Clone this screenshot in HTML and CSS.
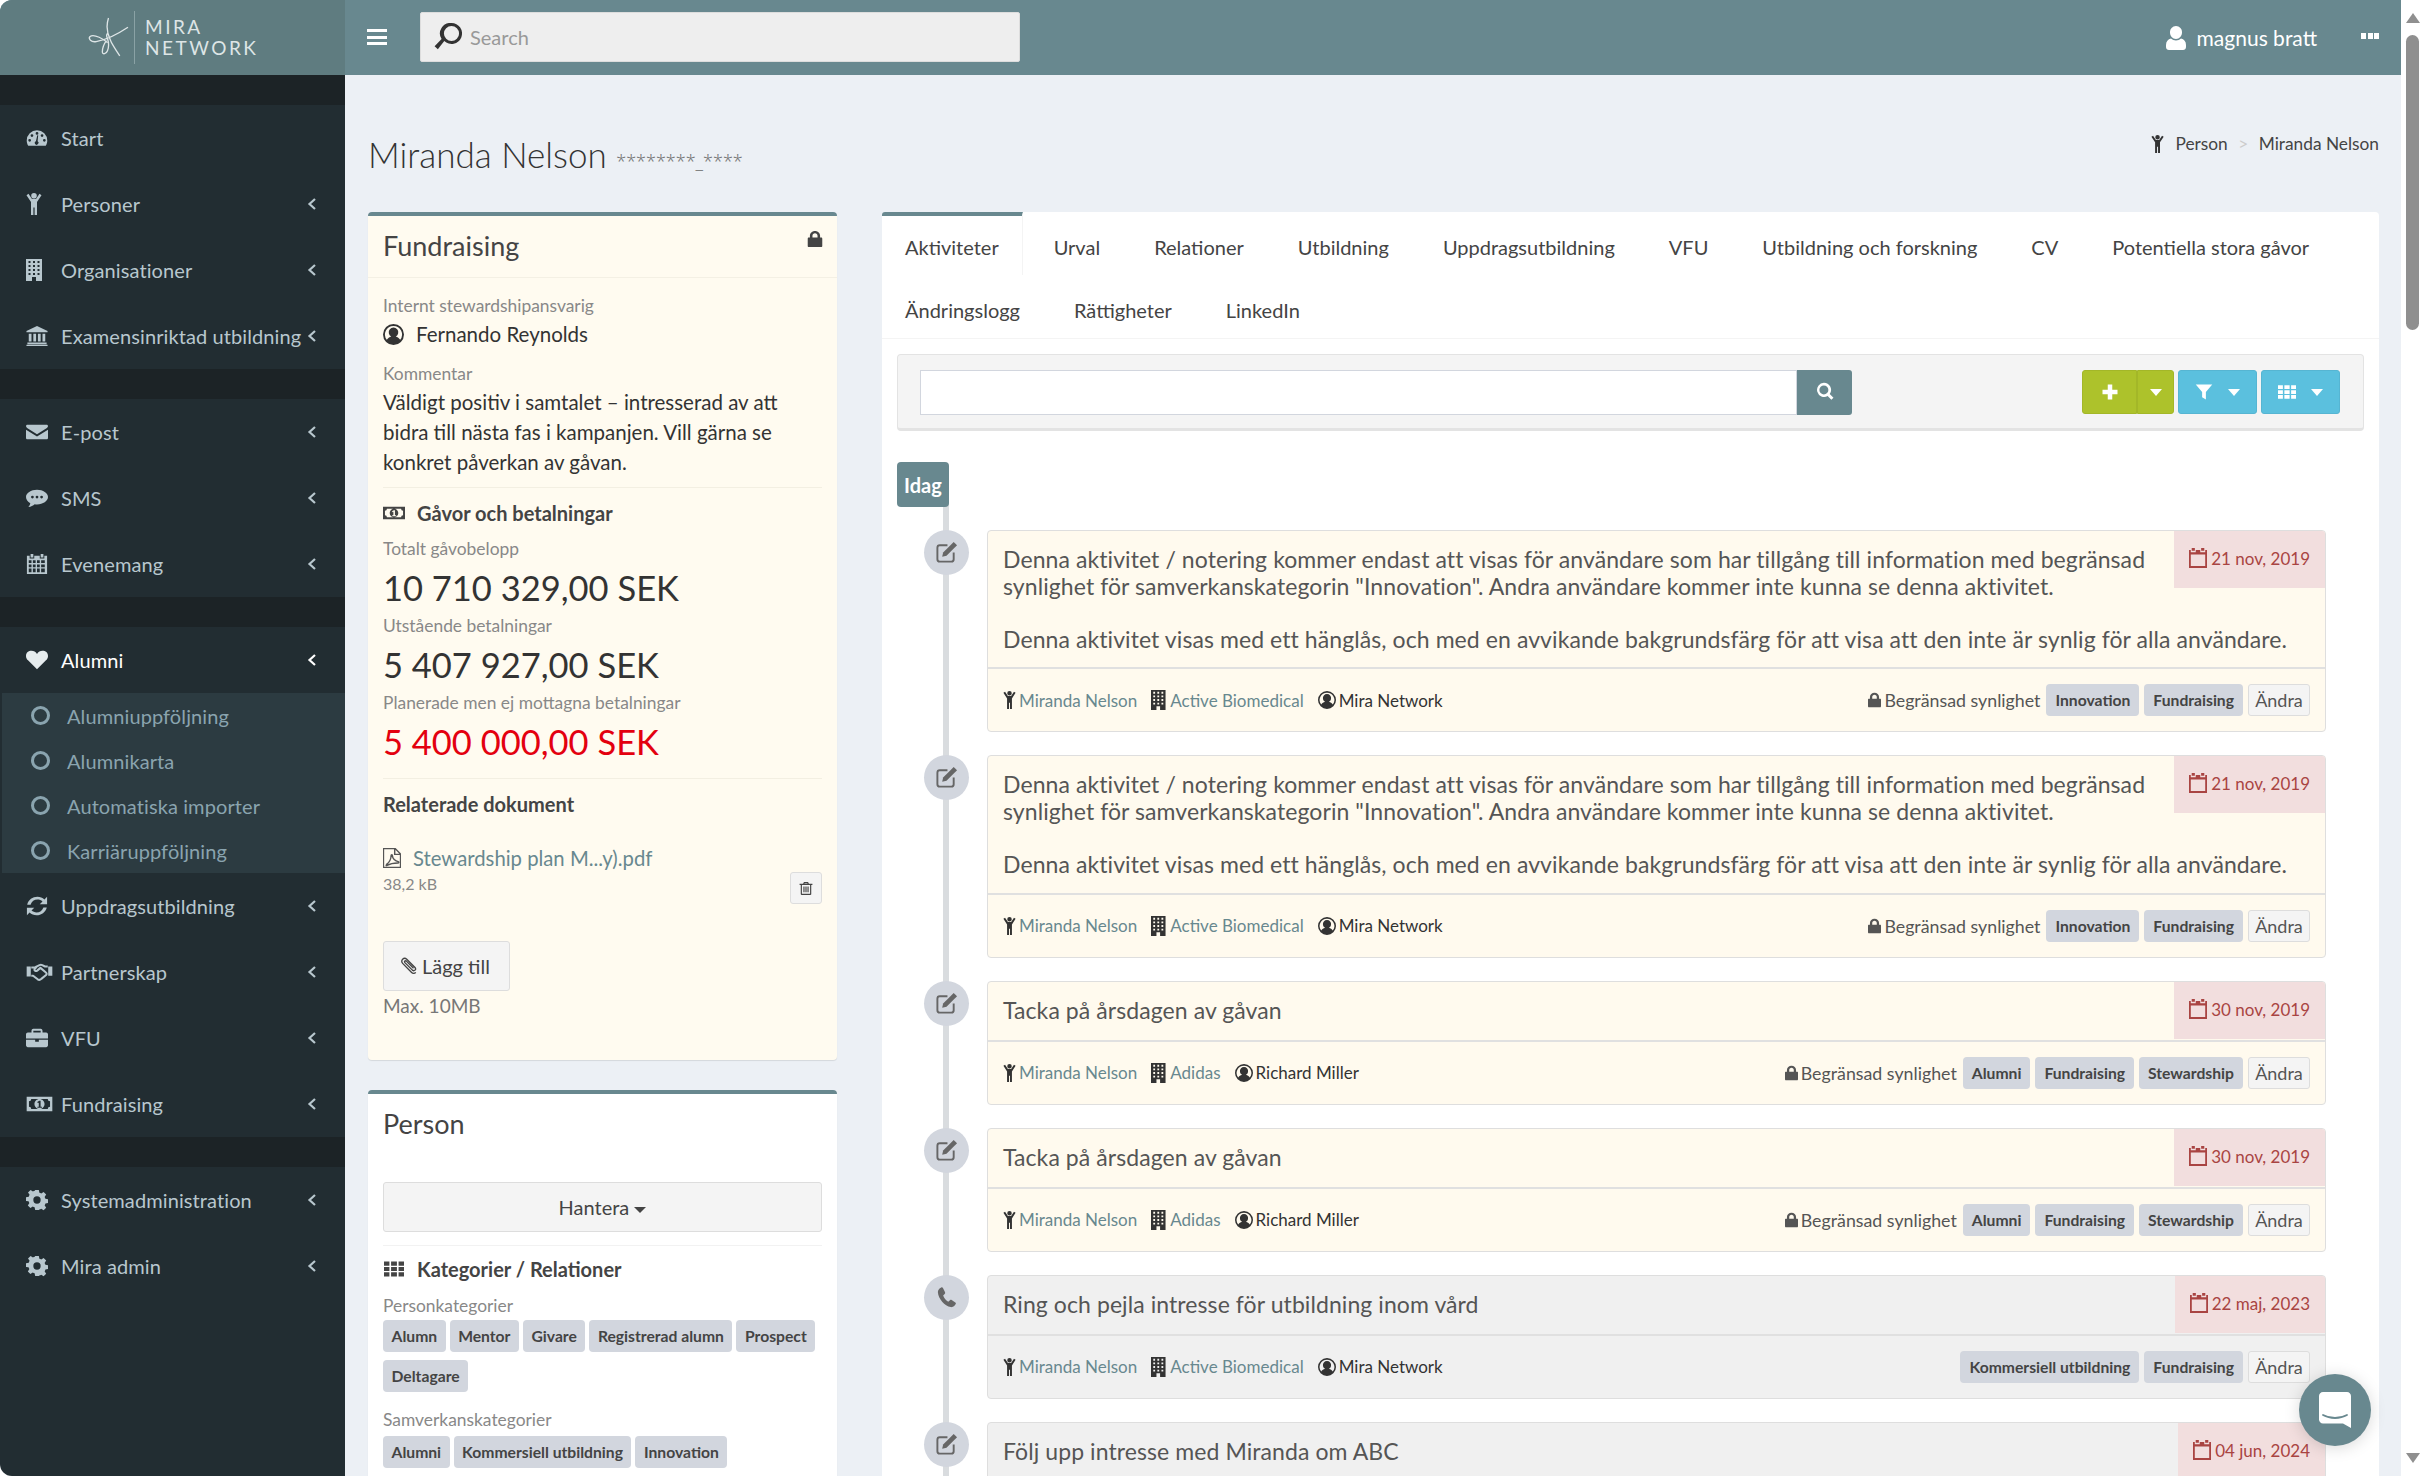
FILE: index.html
```html
<!DOCTYPE html>
<html lang="sv">
<head>
    <meta charset="UTF-8">
    <title>Miranda Nelson - Mira Network</title>
    <link rel="stylesheet" href="styles.css">
</head>
<body>
    <svg class="sprite" xmlns="http://www.w3.org/2000/svg">
        <symbol id="i-dash" viewBox="0 0 24 24"><path fill-rule="evenodd" d="M12 3.5A11.2 11.2 0 0 0 .8 14.7c0 2.2.6 4.2 1.7 5.8h19c1.100-1.600 1.700-3.600 1.700-5.800A11.200 11.200 0 0 0 12 3.500zM12 5.500a1.500 1.500 0 1 1 0 3 1.500 1.500 0 0 1 0-3zM6.500 7.800a1.500 1.500 0 1 1 0 3 1.500 1.500 0 0 1 0-3zM4 13a1.500 1.500 0 1 1 0 3 1.500 1.500 0 0 1 0-3zM20 13a1.500 1.500 0 1 1 0 3 1.500 1.500 0 0 1 0-3zM17.500 7.800a1.500 1.500 0 1 1 0 3 1.500 1.500 0 0 1 0-3zM10.800 15.500l1.500-6.500h1l-.6 6.600a2 2 0 1 1-1.900-.1z"/></symbol>
        <symbol id="i-child" viewBox="4 1 16 22" preserveAspectRatio="xMinYMid"><path d="M12 1a2.800 2.800 0 1 1 0 5.600A2.800 2.800 0 0 1 12 1zM4.500 3.200l2-1.400L10 7h4l3.500-5.200 2 1.400L15 10v13h-2.400v-7.500h-1.200V23H9V10z"/></symbol>
        <symbol id="i-building" viewBox="4 1 16 22" preserveAspectRatio="xMinYMid"><path fill-rule="evenodd" d="M4 1h16v22H4zM6.500 3v2h2V3zM11 3v2h2V3zM15.500 3v2h2V3zM6.500 7v2h2V7zM11 7v2h2V7zM15.500 7v2h2V7zM6.500 11v2h2v-2zM11 11v2h2v-2zM15.500 11v2h2v-2zM6.500 15v2h2v-2zM15.500 15v2h2v-2zM11 15v2h2v-2zM10 19v4h4v-4z"/></symbol>
        <symbol id="i-bank" viewBox="0 0 24 24"><path d="M12 1l11.500 5.500V8H.5V6.500zM3 9.500h3V18H3zM8 9.500h3V18H8zM13 9.500h3V18h-3zM18 9.500h3V18h-3zM1.500 19h21v2h-21zM.5 21.500h23V23H.5z"/></symbol>
        <symbol id="i-mail" viewBox="0 0 24 24"><path d="M1.500 4h21c.800 0 1.500.7 1.500 1.500 0 .8-.500 1.600-1.200 2.100L12 14.500 1.200 7.600C.5 7.100 0 6.300 0 5.500 0 4.700.7 4 1.500 4zM0 9.500l12 7.500 12-7.500v9c0 .800-.700 1.500-1.500 1.500h-21C.7 20 0 19.300 0 18.500z"/></symbol>
        <symbol id="i-sms" viewBox="0 0 24 24"><path fill-rule="evenodd" d="M12 3c6.600 0 12 3.600 12 8s-5.400 8-12 8c-.9 0-1.700-.1-2.500-.2C7.800 20.500 5.500 21.500 2.500 21.800c1.200-1.200 2-2.700 2.200-4.200C1.900 16.200 0 13.800 0 11c0-4.400 5.400-8 12-8zM7 9.500a1.500 1.500 0 1 0 0 3 1.500 1.500 0 0 0 0-3zM12 9.500a1.500 1.500 0 1 0 0 3 1.500 1.500 0 0 0 0-3zM17 9.500a1.500 1.500 0 1 0 0 3 1.500 1.500 0 0 0 0-3z"/></symbol>
        <symbol id="i-cal" viewBox="0 0 24 24"><path fill-rule="evenodd" d="M5 1h3v4H5zM16 1h3v4h-3zM1 3h3v3h5V3h6v3h5V3h3v20H1zM3 8v3h3V8zM7.500 8v3h3V8zM12 8v3h3V8zM16.500 8v3h4V8zM3 12.500v3h3v-3zM7.500 12.500v3h3v-3zM12 12.500v3h3v-3zM16.500 12.500v3h4v-3zM3 17v4h3v-4zM7.500 17v4h3v-4zM12 17v4h3v-4zM16.500 17v4h4v-4z"/></symbol>
        <symbol id="i-heart" viewBox="0 0 24 24"><path d="M12 22L2.200 12.400C.7 10.900 0 9.200 0 7.500 0 4 2.700 2 6 2c2.400 0 4.700 1.300 6 3.400C13.300 3.300 15.600 2 18 2c3.300 0 6 2 6 5.500 0 1.700-.7 3.400-2.200 4.900z"/></symbol>
        <symbol id="i-refresh" viewBox="0 0 24 24"><path d="M23 2v8h-8l3-3c-1.500-1.300-3.400-2-5.500-2-3.400 0-6.400 2.100-7.500 5.500H1.300C2.700 5.300 7.200 2 12.500 2c2.900 0 5.600 1.100 7.600 3zM1 22v-8h8l-3 3c1.500 1.300 3.400 2 5.500 2 3.400 0 6.400-2.100 7.500-5.500h3.700C21.300 18.700 16.800 22 11.500 22c-2.900 0-5.600-1.100-7.600-3z"/></symbol>
        <symbol id="i-hands" viewBox="0 0 28 24"><path fill="none" stroke="currentColor" stroke-width="2.200" stroke-linejoin="round" d="M5 7h4l5-2.500c1-.4 2-.4 3 0L20 6h3M5 16h2l5 4c1.500 1 3 .5 4-.5l5.500-4.500c.6-.8.2-2-.5-2.500L15 7.500l-3.500 3c-1.500 1-3.500 0-3-1.500L11 6"/><path d="M0 6h4.500v11H0zM23.500 6H28v10h-4.500z"/></symbol>
        <symbol id="i-case" viewBox="0 0 24 24"><path fill-rule="evenodd" d="M8 2h8c1 0 2 1 2 2v2h4c1 0 2 1 2 2v4.500H0V8c0-1 1-2 2-2h4V4c0-1 1-2 2-2zM8 4v2h8V4zM0 14h10v2h4v-2h10v6c0 1-1 2-2 2H2c-1 0-2-1-2-2z"/></symbol>
        <symbol id="i-money" viewBox="0 0 28 24"><path fill-rule="evenodd" d="M0 4h28v16H0zM5 6.500a2.500 2.500 0 0 1-2.500 2.500v6A2.500 2.500 0 0 1 5 17.500h18a2.500 2.500 0 0 1 2.500-2.500V9A2.500 2.500 0 0 1 23 6.500zM14 6.500c3 0 5.500 2.500 5.500 5.500s-2.500 5.500-5.500 5.500S8.500 15 8.500 12 11 6.500 14 6.500zM13.800 8.500l-2.300 1.300.7 1.200 1-.5V15h-1.500v1h5v-1h-1.500V8.500z"/></symbol>
        <symbol id="i-cog" viewBox="0 0 24 24"><path fill-rule="evenodd" d="M10 1h4l.6 3c.7.200 1.400.5 2 .9l2.600-1.700 2.800 2.800-1.700 2.600c.4.600.7 1.300.9 2l3 .6v4l-3 .6c-.2.700-.5 1.400-.9 2l1.700 2.600-2.800 2.800-2.600-1.700c-.6.400-1.300.7-2 .9L14 23h-4l-.6-3c-.7-.2-1.400-.5-2-.9l-2.600 1.700L2 18l1.700-2.600c-.4-.6-.7-1.300-.9-2L0 13V9l3-.6c.2-.7.5-1.400.9-2L2.200 3.800 5 1l2.600 1.700c.6-.4 1.300-.7 2-.9zM12 8a4 4 0 1 0 0 8 4 4 0 0 0 0-8z"/></symbol>
        <symbol id="i-chev" viewBox="0 0 12 24"><path fill="none" stroke="currentColor" stroke-width="2.200" d="M9 7l-5.500 5L9 17"/></symbol>
        <symbol id="i-lock" viewBox="2 1 20 22"><path fill-rule="evenodd" d="M12 1c3.900 0 7 3 7 6.500V10h1.500c1 0 1.500.7 1.500 1.500v10c0 .8-.5 1.500-1.500 1.500h-17C2.500 23 2 22.300 2 21.500v-10C2 10.700 2.500 10 3.500 10H5V7.500C5 4 8.100 1 12 1zM12 4C10 4 8.500 5.500 8.500 7.500V10h7V7.500C15.500 5.500 14 4 12 4z"/></symbol>
        <symbol id="i-ucircle" viewBox="1 1 22 22"><path fill-rule="evenodd" d="M12 1a11 11 0 1 1 0 22 11 11 0 0 1 0-22zM12 3a9 9 0 0 0-7 14.600c1-1.800 2.800-3 4.600-3.500a5 5 0 1 1 4.800 0c1.800.5 3.600 1.700 4.600 3.500A9 9 0 0 0 12 3z"/></symbol>
        <symbol id="i-pdf" viewBox="2 1 20 22"><path fill="none" stroke="currentColor" stroke-width="1.600" d="M2.500 1.500h13l6 6v15h-19zM15 1.500V8h6.500M6 19c3-2 5-6.500 5-9.500 0-1.500 1.500-1.500 1.500 0 0 3 3 6 6.500 6.500.8.200.8 1.500-.5 1.500-3.500 0-9 1-12 2.800-1 .6-1.300-.3-.5-.8z"/></symbol>
        <symbol id="i-trash" viewBox="0 0 24 24"><path fill-rule="evenodd" d="M8.500 1h7l1.500 3h6v2h-2v15.500c0 1-.8 1.500-1.500 1.500h-15C3.800 23 3 22.500 3 21.500V6H1V4h6zM9.800 3l-.5 1h5.400l-.5-1zM5 6v15h14V6zM7.500 8.500h2v10h-2zM11 8.500h2v10h-2zM14.500 8.500h2v10h-2z"/></symbol>
        <symbol id="i-clip" viewBox="0 0 24 24"><path fill="none" stroke="currentColor" stroke-width="1.800" d="M21 20.500c-1.500 1.800-4 1.800-5.500.3L3.500 8.500C1.800 6.800 2 4.500 3.500 3S7.200 1.300 9 3l11 11c1 1.200 1 2.500 0 3.500s-2.300 1-3.500 0L6.500 7.500c-.6-.8-.6-1.500 0-2s1.400-.5 2 0l9.500 9.500"/></symbol>
        <symbol id="i-th" viewBox="0 0 24 24"><path d="M0 3h6.500v5H0zM8.500 3h7v5h-7zM17.500 3H24v5h-6.500zM0 9.500h6.500v5H0zM8.500 9.500h7v5h-7zM17.500 9.500H24v5h-6.500zM0 16h6.500v5H0zM8.500 16h7v5h-7zM17.500 16H24v5h-6.500z"/></symbol>
        <symbol id="i-plus" viewBox="0 0 24 24"><path d="M9 2h6v7h7v6h-7v7H9v-7H2V9h7z"/></symbol>
        <symbol id="i-filter" viewBox="0 0 24 24"><path d="M1 2h22L14.500 12v10l-5-3v-7z"/></symbol>
        <symbol id="i-search" viewBox="0 0 24 24"><path fill-rule="evenodd" d="M10.500 1a9.500 9.500 0 0 1 7.800 15l5 5-2.800 2.800-5-5A9.500 9.500 0 1 1 10.500 1zM10.500 4.500a6 6 0 1 0 0 12 6 6 0 0 0 0-12z"/></symbol>
        <symbol id="i-edit" viewBox="0 0 24 24"><path fill="none" stroke="currentColor" stroke-width="2" d="M13 4.500H5C3.500 4.500 2.500 5.500 2.500 7v12c0 1.500 1 2.500 2.500 2.500h12c1.500 0 2.500-1 2.500-2.500v-7"/><path d="M19.500 1l3.500 3.500L12 15.500l-4.500 1 1-4.500z"/></symbol>
        <symbol id="i-phone" viewBox="0 0 24 24"><path d="M6.500 1.500c.7-.4 1.400-.2 1.800.5l2.200 4.500c.3.700.1 1.300-.4 1.800L8.500 10c.8 2.500 2.800 5.200 5.300 6.500l1.800-1.700c.5-.5 1.200-.6 1.800-.2l3.800 2.500c.6.400.8 1.200.4 1.800-1.200 2-3 3.600-5.100 3.100C10 20.800 3.500 13.500 3 6.500c-.1-2.200 1.500-4 3.500-5z"/></symbol>
        <symbol id="i-calo" viewBox="2 1 20 22"><path fill-rule="evenodd" d="M5 1h3.500v3H5zM15.500 1H19v3h-3.500zM2 3h2v2.500h5.500V3h5v2.500H20V3h2v20H2zM4 8v13h16V8z"/></symbol>
        <symbol id="i-user" viewBox="0 0 24 24"><path d="M12 0a6 6 0 0 1 6 6.500C18 10 15.500 13 12 13S6 10 6 6.500A6 6 0 0 1 12 0zM7 12.500c1.300 1.200 3 2 5 2s3.700-.8 5-2c3 .6 5 3 5 6.500v2c0 1.800-1.300 3-3 3H5c-1.700 0-3-1.200-3-3v-2c0-3.500 2-5.900 5-6.500z"/></symbol>
        <symbol id="i-mag" viewBox="0 0 24 24"><path fill-rule="evenodd" d="M15 0a9 9 0 1 1-6.200 15.500l-5.500 7L.5 20l6-6.200A9 9 0 0 1 15 0zM15 2.500a6.500 6.500 0 1 0 0 13 6.500 6.500 0 0 0 0-13z"/></symbol>
    </svg>

    <div class="window">
        <div class="app">
            <header class="topbar">
                <a class="logo">
                    <svg class="logo-mark" viewBox="0 0 40 40"><path fill="none" stroke="currentColor" stroke-width="1.300" d="M20 1c-2 6-2 14 2 22 2 5 6 10 9 15M39 10C30 16 20 22 8 24c-5 1-8-3-6-5 4-3 14 3 17 6M18 23c-3 4-4 9-4 11 0 3 4 2 5-1 2-5 1-9 0-12-1-2-1-4 0-5"/></svg>
                    <span class="logo-text"><span>MIRA</span><span>NETWORK</span></span>
                </a>
                <div class="topbar-main">
                    <button class="burger"><span></span><span></span><span></span></button>
                    <div class="topsearch"><svg class="ic"><use href="#i-mag"/></svg><span>Search</span></div>
                    <div class="topuser"><svg class="ic"><use href="#i-user"/></svg><span>magnus bratt</span></div>
                    <div class="topdots"><i></i><i></i><i></i></div>
                </div>
            </header>

            <nav class="sidebar">
                <div class="nav-gap"></div>
                <ul class="nav-group">
                    <li class="nav-item"><svg class="ic"><use href="#i-dash"/></svg><span>Start</span></li>
                    <li class="nav-item"><svg class="ic"><use href="#i-child"/></svg><span>Personer</span><svg class="chev"><use href="#i-chev"/></svg></li>
                    <li class="nav-item"><svg class="ic"><use href="#i-building"/></svg><span>Organisationer</span><svg class="chev"><use href="#i-chev"/></svg></li>
                    <li class="nav-item"><svg class="ic"><use href="#i-bank"/></svg><span>Examensinriktad utbildning</span><svg class="chev"><use href="#i-chev"/></svg></li>
                </ul>
                <div class="nav-gap"></div>
                <ul class="nav-group">
                    <li class="nav-item"><svg class="ic"><use href="#i-mail"/></svg><span>E-post</span><svg class="chev"><use href="#i-chev"/></svg></li>
                    <li class="nav-item"><svg class="ic"><use href="#i-sms"/></svg><span>SMS</span><svg class="chev"><use href="#i-chev"/></svg></li>
                    <li class="nav-item"><svg class="ic"><use href="#i-cal"/></svg><span>Evenemang</span><svg class="chev"><use href="#i-chev"/></svg></li>
                </ul>
                <div class="nav-gap"></div>
                <ul class="nav-group">
                    <li class="nav-item active"><svg class="ic"><use href="#i-heart"/></svg><span>Alumni</span><svg class="chev"><use href="#i-chev"/></svg></li>
                    <li>
                        <ul class="nav-sub">
                            <li><i class="ring"></i><span>Alumniuppföljning</span></li>
                            <li><i class="ring"></i><span>Alumnikarta</span></li>
                            <li><i class="ring"></i><span>Automatiska importer</span></li>
                            <li><i class="ring"></i><span>Karriäruppföljning</span></li>
                        </ul>
                    </li>
                    <li class="nav-item"><svg class="ic"><use href="#i-refresh"/></svg><span>Uppdragsutbildning</span><svg class="chev"><use href="#i-chev"/></svg></li>
                    <li class="nav-item"><svg class="ic ic-wide"><use href="#i-hands"/></svg><span>Partnerskap</span><svg class="chev"><use href="#i-chev"/></svg></li>
                    <li class="nav-item"><svg class="ic"><use href="#i-case"/></svg><span>VFU</span><svg class="chev"><use href="#i-chev"/></svg></li>
                    <li class="nav-item"><svg class="ic ic-wide"><use href="#i-money"/></svg><span>Fundraising</span><svg class="chev"><use href="#i-chev"/></svg></li>
                </ul>
                <div class="nav-gap"></div>
                <ul class="nav-group">
                    <li class="nav-item"><svg class="ic"><use href="#i-cog"/></svg><span>Systemadministration</span><svg class="chev"><use href="#i-chev"/></svg></li>
                    <li class="nav-item"><svg class="ic"><use href="#i-cog"/></svg><span>Mira admin</span><svg class="chev"><use href="#i-chev"/></svg></li>
                </ul>
            </nav>

            <main class="content">
                <div class="page-head">
                    <h1>Miranda Nelson <small>********_****</small></h1>
                    <div class="crumbs"><svg class="ic"><use href="#i-child"/></svg><span>Person</span><em>&gt;</em><span>Miranda Nelson</span></div>
                </div>

                <div class="columns">
                    <div class="col-left">
                        <section class="box box-cream">
                            <div class="box-head">
                                <h3>Fundraising</h3>
                                <svg class="ic box-lock"><use href="#i-lock"/></svg>
                            </div>
                            <div class="box-body">
                                <div class="label">Internt stewardshipansvarig</div>
                                <div class="person-row"><svg class="ic"><use href="#i-ucircle"/></svg><span>Fernando Reynolds</span></div>
                                <div class="label label-gap">Kommentar</div>
                                <p class="comment">Väldigt positiv i samtalet – intresserad av att bidra till nästa fas i kampanjen. Vill gärna se konkret påverkan av gåvan.</p>
                                <hr>
                                <h4 class="sub-head"><svg class="ic ic-wide"><use href="#i-money"/></svg>Gåvor och betalningar</h4>
                                <div class="label">Totalt gåvobelopp</div>
                                <div class="amount">10 710 329,00 SEK</div>
                                <div class="label">Utstående betalningar</div>
                                <div class="amount">5 407 927,00 SEK</div>
                                <div class="label">Planerade men ej mottagna betalningar</div>
                                <div class="amount amount-red">5 400 000,00 SEK</div>
                                <hr class="hr-faint">
                                <h4 class="sub-head">Relaterade dokument</h4>
                                <div class="doc">
                                    <div>
                                        <a class="doc-link"><svg class="ic"><use href="#i-pdf"/></svg>Stewardship plan M...y).pdf</a>
                                        <div class="doc-size">38,2 kB</div>
                                    </div>
                                    <button class="btn-trash"><svg class="ic"><use href="#i-trash"/></svg></button>
                                </div>
                                <button class="btn-add"><svg class="ic"><use href="#i-clip"/></svg>Lägg till</button>
                                <div class="max-size">Max. 10MB</div>
                            </div>
                        </section>

                        <section class="box">
                            <div class="box-head box-head-plain"><h3>Person</h3></div>
                            <div class="box-body box-body-person">
                                <button class="btn-manage">Hantera <i class="caret"></i></button>
                                <hr>
                                <h4 class="sub-head"><svg class="ic"><use href="#i-th"/></svg>Kategorier / Relationer</h4>
                                <div class="label">Personkategorier</div>
                                <div class="tags">
                                    <span class="tag">Alumn</span><span class="tag">Mentor</span><span class="tag">Givare</span><span class="tag">Registrerad alumn</span><span class="tag">Prospect</span><span class="tag">Deltagare</span>
                                </div>
                                <div class="label label-tags">Samverkanskategorier</div>
                                <div class="tags">
                                    <span class="tag">Alumni</span><span class="tag">Kommersiell utbildning</span><span class="tag">Innovation</span>
                                </div>
                            </div>
                        </section>
                    </div>

                    <div class="col-right">
                        <ul class="tabs">
                            <li class="active">Aktiviteter</li>
                            <li>Urval</li>
                            <li>Relationer</li>
                            <li>Utbildning</li>
                            <li>Uppdragsutbildning</li>
                            <li>VFU</li>
                            <li>Utbildning och forskning</li>
                            <li>CV</li>
                            <li>Potentiella stora gåvor</li>
                            <li>Ändringslogg</li>
                            <li>Rättigheter</li>
                            <li>LinkedIn</li>
                        </ul>
                        <div class="tab-pane">
                            <div class="toolbar">
                                <div class="searchbar">
                                    <input type="text">
                                    <button class="btn-search"><svg class="ic"><use href="#i-search"/></svg></button>
                                </div>
                                <div class="btn-group">
                                    <button class="btn btn-green btn-plus"><svg class="ic"><use href="#i-plus"/></svg></button>
                                    <button class="btn btn-green btn-split"><i class="caret"></i></button>
                                </div>
                                <button class="btn btn-blue"><svg class="ic"><use href="#i-filter"/></svg><i class="caret"></i></button>
                                <button class="btn btn-blue"><svg class="ic"><use href="#i-th"/></svg><i class="caret"></i></button>
                            </div>

                            <div class="timeline">
                                <div class="tl-label">Idag</div>

                                <article class="tl-item">
                                    <div class="tl-dot"><svg class="ic"><use href="#i-edit"/></svg></div>
                                    <div class="tl-head">
                                        <div class="tl-date"><svg class="ic"><use href="#i-calo"/></svg>21 nov, 2019</div>
                                        Denna aktivitet / notering kommer endast att visas för användare som har tillgång till information med begränsad synlighet för samverkanskategorin "Innovation". Andra användare kommer inte kunna se denna aktivitet.<br><br>Denna aktivitet visas med ett hänglås, och med en avvikande bakgrundsfärg för att visa att den inte är synlig för alla användare.
                                    </div>
                                    <div class="tl-foot">
                                        <span class="who"><svg class="ic"><use href="#i-child"/></svg><a>Miranda Nelson</a></span>
                                        <span class="who who-org"><svg class="ic"><use href="#i-building"/></svg><a>Active Biomedical</a></span>
                                        <span class="who who-user"><svg class="ic"><use href="#i-ucircle"/></svg>Mira Network</span>
                                        <span class="tl-right">
                                            <span class="vis"><svg class="ic"><use href="#i-lock"/></svg>Begränsad synlighet</span>
                                            <span class="tag">Innovation</span><span class="tag">Fundraising</span>
                                            <button class="btn-edit">Ändra</button>
                                        </span>
                                    </div>
                                </article>

                                <article class="tl-item">
                                    <div class="tl-dot"><svg class="ic"><use href="#i-edit"/></svg></div>
                                    <div class="tl-head">
                                        <div class="tl-date"><svg class="ic"><use href="#i-calo"/></svg>21 nov, 2019</div>
                                        Denna aktivitet / notering kommer endast att visas för användare som har tillgång till information med begränsad synlighet för samverkanskategorin "Innovation". Andra användare kommer inte kunna se denna aktivitet.<br><br>Denna aktivitet visas med ett hänglås, och med en avvikande bakgrundsfärg för att visa att den inte är synlig för alla användare.
                                    </div>
                                    <div class="tl-foot">
                                        <span class="who"><svg class="ic"><use href="#i-child"/></svg><a>Miranda Nelson</a></span>
                                        <span class="who who-org"><svg class="ic"><use href="#i-building"/></svg><a>Active Biomedical</a></span>
                                        <span class="who who-user"><svg class="ic"><use href="#i-ucircle"/></svg>Mira Network</span>
                                        <span class="tl-right">
                                            <span class="vis"><svg class="ic"><use href="#i-lock"/></svg>Begränsad synlighet</span>
                                            <span class="tag">Innovation</span><span class="tag">Fundraising</span>
                                            <button class="btn-edit">Ändra</button>
                                        </span>
                                    </div>
                                </article>

                                <article class="tl-item">
                                    <div class="tl-dot"><svg class="ic"><use href="#i-edit"/></svg></div>
                                    <div class="tl-head">
                                        <div class="tl-date"><svg class="ic"><use href="#i-calo"/></svg>30 nov, 2019</div>
                                        Tacka på årsdagen av gåvan
                                    </div>
                                    <div class="tl-foot">
                                        <span class="who"><svg class="ic"><use href="#i-child"/></svg><a>Miranda Nelson</a></span>
                                        <span class="who who-org"><svg class="ic"><use href="#i-building"/></svg><a>Adidas</a></span>
                                        <span class="who who-user"><svg class="ic"><use href="#i-ucircle"/></svg>Richard Miller</span>
                                        <span class="tl-right">
                                            <span class="vis"><svg class="ic"><use href="#i-lock"/></svg>Begränsad synlighet</span>
                                            <span class="tag">Alumni</span><span class="tag">Fundraising</span><span class="tag">Stewardship</span>
                                            <button class="btn-edit">Ändra</button>
                                        </span>
                                    </div>
                                </article>

                                <article class="tl-item">
                                    <div class="tl-dot"><svg class="ic"><use href="#i-edit"/></svg></div>
                                    <div class="tl-head">
                                        <div class="tl-date"><svg class="ic"><use href="#i-calo"/></svg>30 nov, 2019</div>
                                        Tacka på årsdagen av gåvan
                                    </div>
                                    <div class="tl-foot">
                                        <span class="who"><svg class="ic"><use href="#i-child"/></svg><a>Miranda Nelson</a></span>
                                        <span class="who who-org"><svg class="ic"><use href="#i-building"/></svg><a>Adidas</a></span>
                                        <span class="who who-user"><svg class="ic"><use href="#i-ucircle"/></svg>Richard Miller</span>
                                        <span class="tl-right">
                                            <span class="vis"><svg class="ic"><use href="#i-lock"/></svg>Begränsad synlighet</span>
                                            <span class="tag">Alumni</span><span class="tag">Fundraising</span><span class="tag">Stewardship</span>
                                            <button class="btn-edit">Ändra</button>
                                        </span>
                                    </div>
                                </article>

                                <article class="tl-item tl-open">
                                    <div class="tl-dot"><svg class="ic"><use href="#i-phone"/></svg></div>
                                    <div class="tl-head">
                                        <div class="tl-date"><svg class="ic"><use href="#i-calo"/></svg>22 maj, 2023</div>
                                        Ring och pejla intresse för utbildning inom vård
                                    </div>
                                    <div class="tl-foot">
                                        <span class="who"><svg class="ic"><use href="#i-child"/></svg><a>Miranda Nelson</a></span>
                                        <span class="who who-org"><svg class="ic"><use href="#i-building"/></svg><a>Active Biomedical</a></span>
                                        <span class="who who-user"><svg class="ic"><use href="#i-ucircle"/></svg>Mira Network</span>
                                        <span class="tl-right">
                                            <span class="tag">Kommersiell utbildning</span><span class="tag">Fundraising</span>
                                            <button class="btn-edit">Ändra</button>
                                        </span>
                                    </div>
                                </article>

                                <article class="tl-item tl-open">
                                    <div class="tl-dot"><svg class="ic"><use href="#i-edit"/></svg></div>
                                    <div class="tl-head">
                                        <div class="tl-date"><svg class="ic"><use href="#i-calo"/></svg>04 jun, 2024</div>
                                        Följ upp intresse med Miranda om ABC
                                    </div>
                                </article>
                            </div>
                        </div>
                    </div>
                </div>
            </main>
        </div>

        <aside class="scrollbar">
            <i class="arrow-up"></i>
            <div class="thumb"></div>
            <i class="arrow-down"></i>
        </aside>

        <button class="chat">
            <svg viewBox="0 0 32 36"><path fill="#fff" d="M4 0h24c2.200 0 4 1.800 4 4v32l-8-4.500H4c-2.200 0-4-1.800-4-4V4c0-2.200 1.800-4 4-4z"/><path fill="none" stroke="#68888f" stroke-width="1.800" stroke-linecap="round" d="M4 23c7 4 17 4 24 0"/></svg>
        </button>
    </div>
</body>
</html>
```

FILE: styles.css
```css
* {
    box-sizing: border-box;
}

html, body {
    margin: 0;
    height: 1476px;
    overflow: hidden;
    background-color: #fff;
}

body {
    font-family: Lato, "Open Sans", sans-serif;
    font-size: 18px;
    color: #444;
}

ul {
    list-style: none;
    margin: 0;
    padding: 0;
}

button {
    font-family: inherit;
    cursor: pointer;
}

.sprite {
    display: none;
}

.ic {
    display: inline-block;
    width: 18px;
    height: 18px;
    fill: currentColor;
    flex: none;
}

.window {
    position: relative;
    display: flex;
    height: 1476px;
}

.app {
    width: 2401px;
    height: 1476px;
    display: grid;
    grid-template-columns: 345px 1fr;
    grid-template-rows: 75px 1fr;
    border-radius: 12px 0 0 12px;
    overflow: hidden;
    background-color: #ecf0f5;
}

/* top bar */
.topbar {
    grid-column: 1 / 3;
    display: flex;
    background-color: #68888f;
}

.logo {
    width: 345px;
    display: flex;
    align-items: center;
    padding-left: 88px;
    background-color: #5f7c80;
    color: #dde5e6;
}

.logo-mark {
    width: 41px;
    height: 41px;
    margin-top: -1px;
}

.logo-text {
    display: flex;
    flex-direction: column;
    height: 53px;
    margin-left: 5px;
    padding-left: 10px;
    border-left: 1px solid #8aa2a5;
    font-size: 19px;
    font-weight: 400;
    line-height: 20.500px;
    letter-spacing: 2.500px;
    justify-content: center;
}

.topbar-main {
    flex: 1;
    display: flex;
    align-items: center;
}

.burger {
    width: 20px;
    height: 16px;
    margin-left: 22px;
    margin-top: -1px;
    padding: 0;
    border: none;
    background: none;
    display: flex;
    flex-direction: column;
    justify-content: space-between;
}

.burger span {
    height: 3px;
    width: 100%;
    background-color: #fff;
}

.topsearch {
    width: 600px;
    height: 50px;
    margin-left: 33px;
    margin-top: -1px;
    padding-left: 13px;
    display: flex;
    align-items: center;
    gap: 8px;
    background-color: #eee;
    border: 1px solid #ddd;
    border-radius: 2px;
    color: #999;
    font-size: 20px;
}

.topsearch .ic {
    width: 28px;
    height: 28px;
    color: #333;
}

.topuser {
    margin-left: auto;
    display: flex;
    align-items: center;
    gap: 9px;
    color: #fff;
    font-size: 21px;
}

.topuser .ic {
    width: 24px;
    height: 24px;
}

.topdots {
    display: flex;
    gap: 1.500px;
    margin: -4px 22px 0 44px;
}

.topdots i {
    width: 5px;
    height: 6px;
    background-color: #fff;
}

/* sidebar */
.sidebar {
    background-color: #222d32;
    color: #b8c7ce;
    font-size: 20px;
    letter-spacing: .1px;
}

.nav-gap {
    height: 30px;
    background-color: #1c2326;
}

.nav-item {
    height: 66px;
    display: flex;
    align-items: center;
    padding-left: 26px;
}

.nav-item .ic {
    width: 22px;
    height: 22px;
    margin-right: 13px;
}

.nav-item .ic-wide {
    width: 27px;
    margin-right: 8px;
}

.nav-item span {
    white-space: nowrap;
}

.chev {
    width: 12px;
    height: 24px;
    margin-left: auto;
    margin-right: 27px;
}

.nav-item.active {
    color: #fff;
}

.nav-item.active .ic {
    color: #e6ecee;
}

.nav-sub {
    margin: 0 0 0 2px;
    height: 180px;
    background-color: #2c3b41;
    color: #8aa4af;
}

.nav-sub li {
    height: 45px;
    display: flex;
    align-items: center;
    padding-left: 29px;
}

.ring {
    width: 19px;
    height: 19px;
    margin-right: 17px;
    border: 3px solid #8aa4af;
    border-radius: 50%;
}

/* page */
.content {
    overflow: hidden;
    padding: 0 22px 0 23px;
}

.page-head {
    height: 137px;
    display: flex;
    justify-content: space-between;
    align-items: flex-start;
}

.page-head h1 {
    margin: 54px 0 0;
    font-size: 35px;
    line-height: 50px;
    font-weight: 300;
    color: #333;
}

.page-head small {
    font-family: "Noto Sans", sans-serif;
    font-size: 18px;
    color: #777;
}

.crumbs {
    margin-top: 57px;
    display: flex;
    align-items: center;
    font-size: 17.300px;
    line-height: 24px;
    color: #444;
}

.crumbs .ic {
    width: 14px;
    margin-right: 11px;
    color: #333;
}

.crumbs em {
    font-style: normal;
    margin: 0 10.500px;
    color: #ccc;
}

.columns {
    display: grid;
    grid-template-columns: 469px 1497px;
    gap: 45px;
}

/* left boxes */
.box {
    background-color: #fff;
    border-top: 4px solid #68888f;
    border-radius: 4px;
    box-shadow: 0 1px 1px rgba(0, 0, 0, .1);
    margin-bottom: 30px;
}

.box-cream {
    background-color: #fffbf0;
}

.box-head {
    position: relative;
    height: 62px;
    padding: 14px 15px 0;
    border-bottom: 1px solid #f4f0e4;
}

.box-head h3 {
    margin: 0;
    font-size: 27px;
    line-height: 32px;
    font-weight: 400;
}

.box-head-plain {
    height: 60px;
    border-bottom: none;
}

.box-lock {
    position: absolute;
    top: 15px;
    right: 14px;
    width: 16px;
    height: 16px;
}

.box-body {
    padding: 15px;
    height: 782px;
}

.box-body-person {
    height: auto;
    padding-top: 28px;
}

.box-body-person .sub-head {
    margin-bottom: 9px;
}

.box-body-person .label {
    margin-bottom: 1px;
}

.label {
    font-size: 17.400px;
    line-height: 26px;
    color: #888;
}

.label-gap {
    margin-top: 11px;
}

.box-body-person .label-tags {
    margin-top: 15px;
    margin-bottom: 3px;
}

.person-row {
    display: flex;
    align-items: center;
    height: 32px;
    margin: -1px 0 1px;
    font-size: 20.500px;
    color: #333;
}

.person-row .ic {
    width: 21px;
    height: 21px;
    margin-right: 12px;
}

.comment {
    margin: 0;
    font-size: 20.500px;
    line-height: 30px;
    color: #333;
}

hr {
    margin: 10px 0;
    border: none;
    border-top: 1px solid #f3efe2;
}

.hr-faint {
    margin: 11px 0 10px;
}

.box-body-person hr {
    margin: 13px 0 8px;
    border-color: #f2f2f2;
}

.sub-head {
    margin: 0;
    display: flex;
    align-items: center;
    height: 30px;
    margin-bottom: 8px;
    font-size: 20px;
    font-weight: 700;
    color: #444;
}

.sub-head .ic {
    width: 22px;
    height: 20px;
    margin-right: 12px;
}

.amount {
    height: 51px;
    font-size: 34.500px;
    line-height: 51px;
    color: #333;
}

.amount-red {
    color: #e3000f;
}

.doc {
    display: flex;
    justify-content: space-between;
    align-items: flex-end;
    margin-top: 26px;
    height: 59px;
}

.doc-link {
    display: flex;
    align-items: center;
    height: 27px;
    font-size: 20.300px;
    color: #68888f;
}

.doc-link .ic {
    width: 18px;
    height: 20px;
    margin-right: 12px;
    color: #555;
}

.doc-size {
    font-size: 16px;
    line-height: 26px;
    margin-bottom: 7px;
    color: #888;
}

.btn-trash {
    width: 32px;
    height: 32px;
    display: flex;
    align-items: center;
    justify-content: center;
    padding: 0;
    background-color: #f4f4f4;
    border: 1px solid #ddd;
    border-radius: 3px;
    color: #444;
}

.btn-trash .ic {
    width: 14px;
    height: 15px;
}

.btn-add {
    display: flex;
    align-items: center;
    gap: 4px;
    margin-top: 37px;
    height: 50px;
    width: 127px;
    padding: 0 16px;
    background-color: #f4f4f4;
    border: 1px solid #ddd;
    border-radius: 3px;
    font-size: 20px;
    color: #444;
}

.max-size {
    margin-top: 2px;
    font-size: 19px;
    line-height: 26px;
    color: #777;
}

.btn-manage {
    width: 100%;
    height: 50px;
    background-color: #f4f4f4;
    border: 1px solid #ddd;
    border-radius: 3px;
    font-size: 20px;
    color: #444;
}

.caret {
    display: inline-block;
    width: 0;
    height: 0;
    border-top: 6px solid currentColor;
    border-left: 6px solid transparent;
    border-right: 6px solid transparent;
    vertical-align: middle;
}

.tags {
    display: flex;
    flex-wrap: wrap;
    gap: 8px 4px;
}

.tag {
    display: inline-flex;
    align-items: center;
    height: 32px;
    padding: 0 8.500px;
    background-color: #d2d6de;
    border-radius: 4px;
    font-size: 15.700px;
    font-weight: 700;
    color: #444;
    white-space: nowrap;
}

/* tabs */
.col-right {
    background-color: #fff;
    border-radius: 4px;
    height: 1300px;
}

.tabs {
    display: flex;
    flex-wrap: wrap;
    gap: 0 8px;
    height: 127px;
    border-bottom: 1px solid #f4f4f4;
}

.tabs li {
    height: 63px;
    padding: 19px 23px 16px;
    border-top: 4px solid transparent;
    font-size: 20px;
    line-height: 24px;
    color: #444;
}

.tabs li.active {
    border-top-color: #68888f;
    border-right: 1px solid #f4f4f4;
    border-radius: 3px 0 0 0;
}

.tab-pane {
    padding: 15px;
}

.toolbar {
    height: 77px;
    display: flex;
    align-items: center;
    padding: 1px 23px 0 22px;
    background-color: #f4f4f4;
    border: 1px solid #e3e3e3;
    border-bottom-width: 3px;
    border-radius: 4px;
}

.searchbar {
    display: flex;
    flex: none;
    width: 932px;
    height: 45px;
    margin-right: auto;
}

.searchbar input {
    flex: 1;
    border: 1px solid #d2d6de;
    background-color: #fff;
}

.btn-search {
    width: 55px;
    border: none;
    border-radius: 0 3px 3px 0;
    background-color: #68888f;
    color: #fff;
}

.btn {
    height: 44px;
    border: 1px solid transparent;
    border-radius: 3px;
    display: inline-flex;
    align-items: center;
    justify-content: center;
    color: #fff;
    padding: 0;
}

.btn .ic {
    width: 18px;
    height: 18px;
}

.btn-group {
    display: flex;
    margin-right: 4px;
}

.btn-green {
    background-color: #adc22b;
    border-color: #a3b728;
}

.btn-plus {
    width: 55px;
    border-radius: 3px 0 0 3px;
}

.btn-split {
    width: 37px;
    border-radius: 0 3px 3px 0;
}

.btn-split .caret, .btn-blue .caret {
    border-top-width: 7px;
    border-left-width: 6px;
    border-right-width: 6px;
}

.btn-blue {
    width: 79px;
    gap: 15px;
    background-color: #5bc0de;
    border-color: #56b5d2;
}

.btn-blue + .btn-blue {
    margin-left: 4px;
}

/* timeline */
.timeline {
    position: relative;
    padding-top: 31px;
}

.timeline::before {
    content: "";
    position: absolute;
    top: 60px;
    bottom: 0;
    left: 46px;
    width: 6px;
    background-color: #d9dcdf;
}

.tl-label {
    position: relative;
    display: inline-flex;
    align-items: center;
    height: 45px;
    padding: 0 7px;
    background-color: #68888f;
    border-radius: 4px;
    color: #fff;
    font-size: 20px;
    font-weight: 700;
    margin-bottom: 23px;
}

.tl-item {
    position: relative;
    margin: 0 38px 23px 90px;
    background-color: #fffaee;
    border: 1px solid #dedede;
    border-radius: 4px;
}

.tl-open {
    background-color: #f0f0f0;
}

.tl-dot {
    position: absolute;
    top: -1px;
    left: -64px;
    width: 45px;
    height: 45px;
    display: flex;
    align-items: center;
    justify-content: center;
    border-radius: 50%;
    background-color: #d2d6de;
    color: #666;
}

.tl-dot .ic {
    width: 23px;
    height: 23px;
}

.tl-head {
    padding: 15px 15px 15px;
    min-height: 58px;
    font-size: 23px;
    line-height: 26.600px;
    color: #555;
    letter-spacing: .08px;
}

.tl-date {
    float: right;
    height: 57px;
    margin: -15px -15px 0 20px;
    padding: 16px 15px 0;
    display: flex;
    align-items: flex-start;
    gap: 4px;
    background-color: #f2dede;
    border-radius: 0 3px 0 0;
    color: #a94442;
    font-size: 17px;
    letter-spacing: 0;
    line-height: 24px;
}

.tl-date .ic {
    width: 18px;
    height: 20px;
    margin-top: 1px;
}

.tl-foot {
    height: 64px;
    display: flex;
    align-items: center;
    gap: 14px;
    padding: 0 15px;
    border-top: 2px solid #e0e0e0;
    font-size: 17px;
    color: #333;
}

.who {
    display: inline-flex;
    align-items: center;
    gap: 3px;
}

.who .ic {
    width: 13px;
    height: 18px;
}

.who-org {
    gap: 4px;
}

.who-org .ic {
    width: 15px;
    height: 20px;
}

.who-user .ic {
    width: 18px;
    height: 18px;
}

.who a {
    color: #68888f;
}

.tl-right {
    margin-left: auto;
    display: flex;
    align-items: center;
    gap: 5px;
}

.tl-right .tag {
    padding: 0 9px;
}

.vis {
    display: inline-flex;
    align-items: center;
    gap: 3px;
    margin-right: 1px;
    font-size: 17.800px;
    color: #555;
}

.vis .ic {
    width: 13px;
    height: 16px;
}

.btn-edit {
    width: 62px;
    height: 32px;
    padding: 0;
    background-color: #f4f4f4;
    border: 1px solid #ddd;
    border-radius: 3px;
    font-size: 18px;
    color: #555;
}

/* fake browser scrollbar */
.scrollbar {
    position: relative;
    width: 23px;
    background-color: #fff;
}

.thumb {
    position: absolute;
    top: 35px;
    left: 5px;
    width: 13px;
    height: 295px;
    border-radius: 7px;
    background-color: #8f8f8f;
}

.arrow-up, .arrow-down {
    position: absolute;
    left: 5px;
    width: 0;
    height: 0;
    border-left: 7px solid transparent;
    border-right: 7px solid transparent;
}

.arrow-up {
    top: 13px;
    border-bottom: 10px solid #8f8f8f;
}

.arrow-down {
    top: 1453px;
    border-top: 10px solid #8f8f8f;
}

.chat {
    position: absolute;
    left: 2299px;
    top: 1374px;
    width: 72px;
    height: 72px;
    padding: 0;
    border: none;
    border-radius: 50%;
    background-color: #68888f;
    box-shadow: 0 2px 16px rgba(0, 0, 0, .15);
    display: flex;
    align-items: center;
    justify-content: center;
}

.chat svg {
    width: 32px;
    height: 36px;
}
```
